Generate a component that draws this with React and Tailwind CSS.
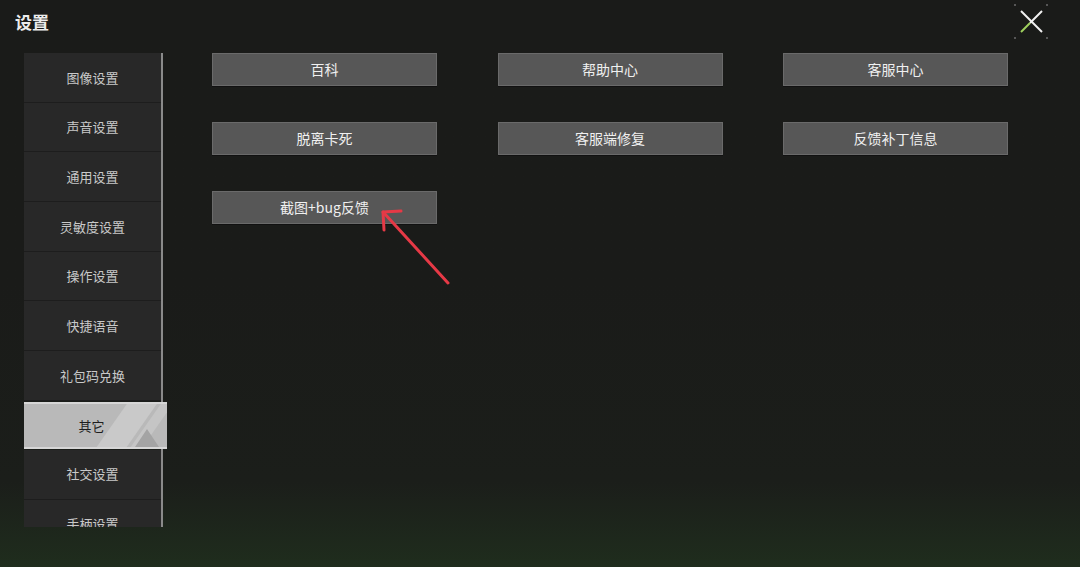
import React from "react";

const tabs = [
  "图像设置",
  "声音设置",
  "通用设置",
  "灵敏度设置",
  "操作设置",
  "快捷语音",
  "礼包码兑换",
  "其它",
  "社交设置",
  "手柄设置",
];

const actions = [
  "百科",
  "帮助中心",
  "客服中心",
  "脱离卡死",
  "客服端修复",
  "反馈补丁信息",
  "截图+bug反馈",
];

const font = { fontFamily: '"Noto Sans CJK SC", "Noto Sans", sans-serif' };

function CloseIcon() {
  return (
    <svg width="40" height="40" viewBox="0 0 40 40">
      <circle cx="3" cy="3" r="1" fill="#6b6b6b" />
      <circle cx="35" cy="3" r="1" fill="#6b6b6b" />
      <circle cx="3" cy="36" r="1" fill="#6b6b6b" />
      <circle cx="35" cy="36" r="1" fill="#6b6b6b" />
      <line x1="9" y1="9" x2="30" y2="30" stroke="#f2f2f2" strokeWidth="2" />
      <line x1="30" y1="9" x2="18" y2="21" stroke="#f2f2f2" strokeWidth="2" />
      <line x1="18" y1="21" x2="9" y2="30" stroke="#9fd05e" strokeWidth="2" />
    </svg>
  );
}

function SideTab({ label, active }) {
  if (active) {
    return (
      <div className="relative h-[47px] my-[1px] w-[143px] flex items-center justify-center overflow-hidden bg-[#b9b9b9] border-y-2 border-[#d6d6d6]">
        <div className="absolute left-[86px] top-[-6px] h-[60px] w-[30px] skew-x-[-35deg] bg-[#c9c9c9]" />
        <div className="absolute left-[120px] top-[-6px] h-[60px] w-[12px] skew-x-[-35deg] bg-[#c5c5c5]" />
        <div className="absolute right-[8px] bottom-0 w-0 h-0 border-l-[12px] border-r-[12px] border-b-[18px] border-l-transparent border-r-transparent border-b-[#a4a4a4]" />
        <span className="relative text-[13px] text-[#1e1e1e] pr-[8px]">{label}</span>
      </div>
    );
  }
  return (
    <div className="h-[49.7px] w-[137px] flex items-center justify-center bg-[#282828] border-b border-[#1d1d1d] shrink-0">
      <span className="text-[13px] text-[#c9c9c9]">{label}</span>
    </div>
  );
}

export default function App() {
  return (
    <div
      className="relative w-[1080px] h-[567px] overflow-hidden bg-gradient-to-b from-[#1a1b19] from-50% via-[#1b1e1a] via-85% to-[#1f2d1d]"
      style={font}
    >
      {/* Header */}
      <div className="flex items-start justify-between h-[53px] pl-[15px] pr-[28px]">
        <h1 className="mt-[9px] text-[17px] font-bold text-[#ececec]">设置</h1>
        <div className="mt-[2px]">
          <CloseIcon />
        </div>
      </div>

      <div className="flex">
        {/* Sidebar */}
        <div className="ml-[24px] relative h-[474px] w-[143px] overflow-hidden">
          <div className="absolute left-[137px] top-0 h-full w-[2px] bg-[#8a8a8a]" />
          <div className="flex flex-col">
            {tabs.map((t) => (
              <SideTab key={t} label={t} active={t === "其它"} />
            ))}
          </div>
        </div>

        {/* Action grid */}
        <div className="ml-[45px] grid grid-cols-[225px_225px_225px] gap-x-[60.5px] gap-y-[36px] content-start">
          {actions.map((a) => (
            <button
              key={a}
              className="h-[33px] flex items-center justify-center bg-[#575757] border border-[#6a6a6a] shadow-[0_1px_0_#111] text-[14px] text-[#f0f0f0]"
            >
              {a}
            </button>
          ))}
        </div>
      </div>

      {/* annotation arrow */}
      <svg className="absolute left-[370px] top-[200px]" width="90" height="95" viewBox="0 0 90 95">
        <g stroke="#e63946" strokeWidth="3" strokeLinecap="round" fill="none">
          <line x1="78" y1="83" x2="14" y2="13" />
          <line x1="13" y1="12" x2="31" y2="11" />
          <line x1="13" y1="12" x2="14" y2="30" />
        </g>
      </svg>
    </div>
  );
}
